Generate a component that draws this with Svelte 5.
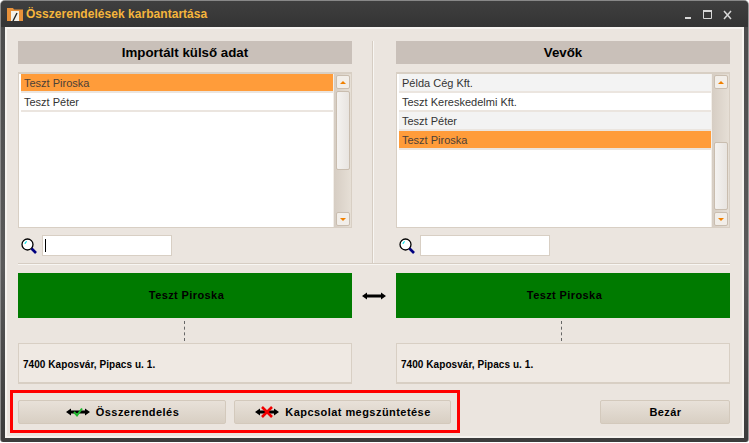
<script lang="ts">
  const left = [
    { name: 'Teszt Piroska', selected: true },
    { name: 'Teszt Péter' }
  ];
  const right = [
    { name: 'Példa Cég Kft.', alt: true },
    { name: 'Teszt Kereskedelmi Kft.' },
    { name: 'Teszt Péter', alt: true },
    { name: 'Teszt Piroska', selected: true }
  ];
  const panels = [
    { title: 'Importált külső adat', items: left, typed: true },
    { title: 'Vevők', items: right, typed: false }
  ];
</script>

{#snippet arrow()}
  <svg class="arrow" width="24" height="8" viewBox="0 0 24 8">
    <path d="M0 4 L5 0.5 V2.5 H19 V0.5 L24 4 L19 7.5 V5.5 H5 V7.5 Z" fill="#000" />
  </svg>
{/snippet}

<div class="window">
  <div class="titlebar">
    <svg class="appicon" width="16" height="15" viewBox="0 0 16 15">
      <path d="M0 1 H6 L7 2.5 H16 V14 H0 Z" fill="#e8913a" />
      <rect x="4" y="4" width="8" height="10" fill="#f4f1ea" />
      <path d="M6 14 L10 6" stroke="#222" stroke-width="1.4" />
    </svg>
    <span class="wintitle">Összerendelések karbantartása</span>
    <div class="controls">
      <svg width="60" height="14" viewBox="0 0 60 14">
        <rect x="1" y="10" width="6" height="2" fill="#d8d8d8" />
        <path d="M19.5 3.5 H27.5 V11.5 H19.5 Z" fill="none" stroke="#d8d8d8" />
        <rect x="19" y="3" width="9" height="2" fill="#d8d8d8" />
        <path d="M40 4 L47 12 M47 4 L40 12" stroke="#d8d8d8" stroke-width="1.5" />
      </svg>
    </div>
  </div>

  <div class="body">
    <div class="pick">
      {#each panels as panel, i}
        <section class="panel" class:divided={i === 0}>
          <h2>{panel.title}</h2>
          <div class="listbox">
            <ul>
              {#each panel.items as item}
                <li class:sel={item.selected} class:alt={item.alt}>{item.name}</li>
              {/each}
            </ul>
            <div class="scroll">
              <span class="sbtn"><i class="up"></i></span>
              <div class="track">
                <span class="thumb" class:low={i === 1}></span>
              </div>
              <span class="sbtn"><i class="down"></i></span>
            </div>
          </div>
          <div class="search">
            <svg width="18" height="18" viewBox="0 0 18 18">
              <circle cx="7.5" cy="7.5" r="5.5" fill="#fff" stroke="#000" stroke-width="1.3" />
              <path d="M5 7 Q5 5 7 4.5" fill="none" stroke="#19e3e8" stroke-width="1.2" />
              <path d="M11.5 11.5 L16 16" stroke="#000080" stroke-width="2.6" />
            </svg>
            <div class="input">
              {#if panel.typed}<span class="caret"></span>{/if}
            </div>
          </div>
        </section>
      {/each}
    </div>

    <div class="match">
      <div class="side">
        <div class="name">Teszt Piroska</div>
        <div class="dash"></div>
        <div class="addr">7400 Kaposvár, Pipacs u. 1.</div>
      </div>
      <div class="link">{@render arrow()}</div>
      <div class="side">
        <div class="name">Teszt Piroska</div>
        <div class="dash"></div>
        <div class="addr">7400 Kaposvár, Pipacs u. 1.</div>
      </div>
    </div>

    <div class="footer">
      <div class="marked">
        <button class="b1">
          <span class="ico">
            {@render arrow()}
            <svg class="over" width="24" height="12" viewBox="0 0 24 12">
              <path d="M8 6 L11 9.5 L16 2.5" fill="none" stroke="#1fb82e" stroke-width="2" />
            </svg>
          </span>
          Összerendelés
        </button>
        <button class="b2">
          <span class="ico">
            {@render arrow()}
            <svg class="over" width="24" height="12" viewBox="0 0 24 12">
              <path d="M7 1 L17 11 M17 1 L7 11" stroke="#f00000" stroke-width="2.6" />
            </svg>
          </span>
          Kapcsolat megszüntetése
        </button>
      </div>
      <button class="b3">Bezár</button>
    </div>
  </div>
</div>

<style>
  :global(body) {
    margin: 0;
    background: #fff;
  }
  .window {
    width: 749px;
    height: 442px;
    box-sizing: border-box;
    display: flex;
    flex-direction: column;
    background: linear-gradient(#4a4a4a, #5a5a5a 60%, #3c3c3c 98%);
    border-left: 1px solid #8a8a8a;
    border-right: 1px solid #999;
    border-top: 1px solid #888;
    border-radius: 5px 5px 3px 3px;
    font-family: "Liberation Sans", Arial, sans-serif;
    overflow: hidden;
  }
  .titlebar {
    height: 26px;
    flex: none;
    display: flex;
    align-items: center;
    gap: 3px;
    padding: 0 4px 0 6px;
    background: linear-gradient(#3f3f3f, #343434);
  }
  .appicon {
    flex: none;
  }
  .wintitle {
    color: #f5b53c;
    font-size: 12px;
    font-weight: bold;
    letter-spacing: 0.04px;
  }
  .controls {
    margin-left: auto;
    display: flex;
  }
  .body {
    flex: 1;
    min-height: 0;
    margin: 0 4px 4px 4px;
    background: #ebe5df;
    border: 2px solid #f6f3ef;
    box-sizing: border-box;
    padding: 12px 12px 0 11px;
    display: flex;
    flex-direction: column;
  }
  .pick {
    display: flex;
    height: 222px;
    flex: none;
    gap: 44px;
    border-bottom: 1px solid #d6cdc3;
    box-shadow: 0 1px 0 #f8f6f3;
  }
  .panel {
    width: 334px;
    flex: none;
    position: relative;
  }
  .panel.divided::after {
    content: '';
    position: absolute;
    top: 0;
    bottom: 0;
    right: -22px;
    width: 1px;
    background: #f8f6f3;
    box-shadow: -1px 0 0 #d6cdc3;
  }
  h2 {
    margin: 0;
    height: 23px;
    line-height: 23px;
    background: #c9c0b9;
    color: #000;
    text-align: center;
    font-size: 13.3px;
    font-weight: bold;
  }
  .listbox {
    margin-top: 8px;
    height: 156px;
    box-sizing: border-box;
    background: #fff;
    border: 1px solid #d8cfc4;
    border-top-width: 2px;
    display: flex;
  }
  ul {
    margin: 0;
    padding: 0;
    list-style: none;
    flex: 1;
    min-width: 0;
  }
  li {
    height: 17px;
    line-height: 19px;
    margin-left: 2px;
    padding-left: 3px;
    border-bottom: 2px solid #ebe5df;
    font-size: 11px;
    color: #333;
    background: #fff;
  }
  li.alt {
    background: #f3f3f3;
  }
  li.sel {
    background: #ff9c3a;
    color: #4b4038;
  }
  .scroll {
    width: 18px;
    flex: none;
    display: flex;
    flex-direction: column;
    background: linear-gradient(90deg, #d6cdc3, #e6dfd6);
    padding: 1px 0;
    box-sizing: border-box;
    align-items: center;
    border-left: 1px solid #f2eee9;
  }
  .sbtn {
    width: 12px;
    height: 12px;
    flex: none;
    background: #f2eee9;
    border: 1px solid #c9bdaf;
    border-radius: 2px;
    display: flex;
    align-items: center;
    justify-content: center;
  }
  .sbtn i {
    width: 0;
    height: 0;
    border-left: 3px solid transparent;
    border-right: 3px solid transparent;
  }
  .up {
    border-bottom: 3px solid #f08000;
  }
  .down {
    border-top: 3px solid #f08000;
  }
  .track {
    flex: 1;
    width: 100%;
    display: flex;
    flex-direction: column;
    align-items: center;
    padding: 2px 0;
    box-sizing: border-box;
  }
  .thumb {
    width: 12px;
    height: 77px;
    background: linear-gradient(90deg, #f4f2f0, #e8e4e0);
    border: 1px solid #c9bdaf;
    border-radius: 2px;
  }
  .thumb.low {
    margin-top: auto;
    height: 66px;
  }
  .search {
    margin-top: 7px;
    display: flex;
    align-items: center;
    gap: 4px;
    padding-left: 2px;
  }
  .input {
    width: 130px;
    height: 21px;
    box-sizing: border-box;
    background: #fff;
    border: 1px solid #d8cfc4;
    display: flex;
    align-items: center;
    padding-left: 2px;
  }
  .caret {
    width: 1px;
    height: 13px;
    background: #000;
  }
  .match {
    display: flex;
    margin-top: 9px;
    flex: none;
  }
  .side {
    width: 334px;
    flex: none;
    display: flex;
    flex-direction: column;
    align-items: stretch;
  }
  .name {
    height: 45px;
    line-height: 45px;
    background: #007a00;
    color: #000;
    text-align: center;
    font-size: 11px;
    font-weight: bold;
    letter-spacing: 0.4px;
    padding-left: 3px;
  }
  .dash {
    height: 20px;
    margin: 3px 0 2px 166px;
    width: 0;
    border-left: 1px dashed #666;
  }
  .side:last-child .dash {
    margin-left: 165px;
  }
  .addr {
    height: 41px;
    line-height: 41px;
    box-sizing: border-box;
    border: 1px solid #d8cfc4;
    border-bottom-width: 2px;
    background: #efe9e3;
    padding-left: 4px;
    font-size: 10px;
    font-weight: bold;
    letter-spacing: 0.06px;
    color: #000;
  }
  .link {
    width: 44px;
    height: 45px;
    display: flex;
    align-items: center;
    justify-content: center;
  }
  .arrow {
    display: block;
  }
  .footer {
    display: flex;
    align-items: center;
    justify-content: space-between;
    margin-top: 6px;
    margin-left: -8px;
  }
  .marked {
    display: flex;
    gap: 8px;
    border: 3px solid #f00;
    padding: 7px 5px;
    height: 43px;
    box-sizing: border-box;
    width: 450px;
  }
  button {
    height: 24px;
    padding: 0 0 0 1px;
    box-sizing: border-box;
    background: linear-gradient(#e8e1d9, #d8cfc3);
    border: 1px solid #d3c9bc;
    border-radius: 2px;
    font: bold 11px "Liberation Sans", Arial, sans-serif;
    letter-spacing: 0.45px;
    color: #000;
    display: flex;
    align-items: center;
    justify-content: center;
    gap: 6px;
  }
  .b1 {
    width: 208px;
  }
  .b2 {
    width: 217px;
  }
  .b3 {
    width: 130px;
  }
  .ico {
    position: relative;
    width: 24px;
    height: 8px;
  }
  .over {
    position: absolute;
    left: 0;
    top: -2px;
  }
</style>
